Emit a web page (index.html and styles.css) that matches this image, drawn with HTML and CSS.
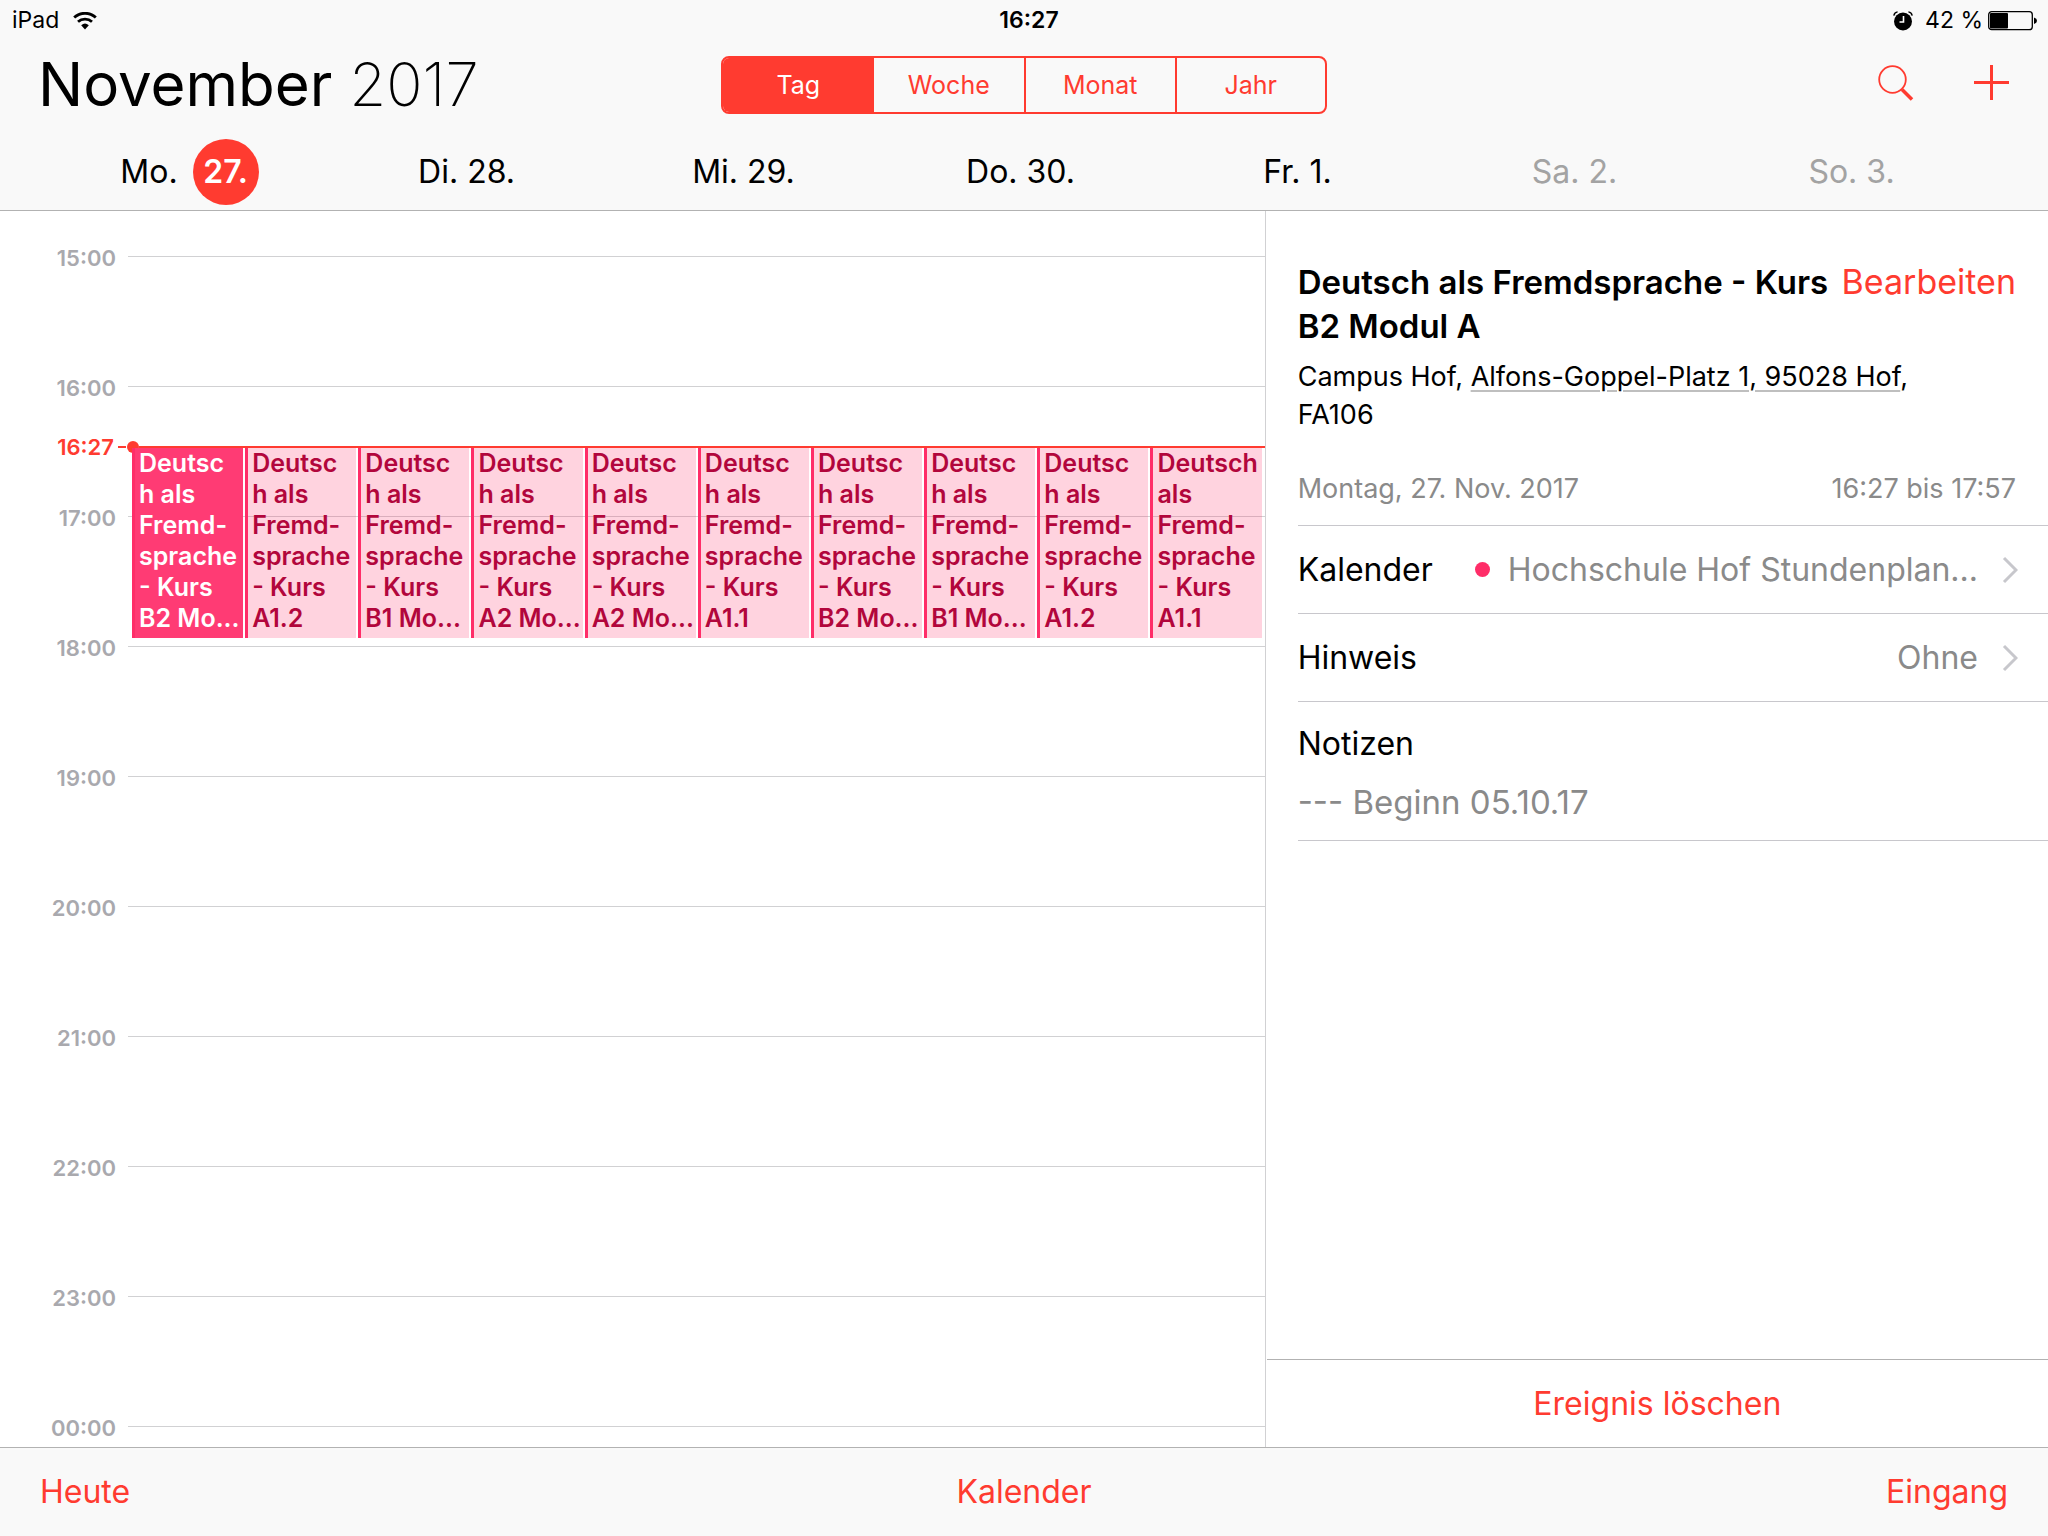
FILE: index.html
```html
<!DOCTYPE html>
<html lang="de">
<head>
<meta charset="utf-8">
<meta name="viewport" content="width=device-width, initial-scale=1">
<title>Kalender</title>
<link rel="stylesheet" href="styles.css">
</head>
<body>
<header class="top">
  <div class="status">
    <div class="status-left">
      <span>iPad</span>
      <svg class="wifi" width="24" height="18" viewBox="0 0 24 18" aria-hidden="true">
        <path d="M1.2 5.6a15.6 15.6 0 0 1 21.6 0" fill="none" stroke="#000" stroke-width="2.8"/>
        <path d="M5 9.8a10.4 10.4 0 0 1 14 0" fill="none" stroke="#000" stroke-width="2.8"/>
        <path d="M8.2 13.2a5.8 5.8 0 0 1 7.600 0L12 17.600z" fill="#000"/>
      </svg>
    </div>
    <time class="clock">16:27</time>
    <div class="status-right">
      <svg class="alarm" width="20" height="20" viewBox="0 0 20 20" aria-hidden="true">
        <circle cx="10" cy="10.500" r="9" fill="#000"/>
        <path d="M10.500 5v6H6.500" fill="none" stroke="#fff" stroke-width="1.600"/>
        <path d="M0.800 4.600Q1.500 1.200 4.600 0.900M19.200 4.600Q18.500 1.200 15.400 0.900" fill="none" stroke="#000" stroke-width="1.400"/>
      </svg>
      <span>42 %</span>
      <svg class="battery" width="50" height="20" viewBox="0 0 50 20" aria-hidden="true">
        <rect x="0.700" y="0.700" width="43.600" height="18" rx="3" fill="none" stroke="#000" stroke-width="1.300"/>
        <rect x="2" y="2" width="18" height="15.500" rx="1" fill="#000"/>
        <path d="M46 6.500q3 1 3 3.300t-3 3.300z" fill="#000"/>
      </svg>
    </div>
  </div>
  <div class="toolbar">
    <h1>November <span class="year">2017</span></h1>
    <nav class="segments" aria-label="Ansicht">
      <button type="button" class="segment selected">Tag</button>
      <button type="button" class="segment">Woche</button>
      <button type="button" class="segment">Monat</button>
      <button type="button" class="segment">Jahr</button>
    </nav>
    <div class="tools">
      <button type="button" aria-label="Suchen">
        <svg width="36" height="36" viewBox="0 0 36 36"><circle cx="14.500" cy="14.500" r="13.300" fill="none" stroke="#ff3b30" stroke-width="1.800"/><path d="M24 24.500l10 10" stroke="#ff3b30" stroke-width="3.600"/></svg>
      </button>
      <button type="button" aria-label="Neues Ereignis">
        <svg width="36" height="36" viewBox="0 0 36 36"><path d="M17.500 0v35M0 17.500h35" stroke="#ff3b30" stroke-width="3"/></svg>
      </button>
    </div>
  </div>
  <nav class="days" aria-label="Woche">
    <button type="button" class="day">Mo. <span class="today">27.</span></button>
    <button type="button" class="day">Di. 28.</button>
    <button type="button" class="day">Mi. 29.</button>
    <button type="button" class="day">Do. 30.</button>
    <button type="button" class="day">Fr. 1.</button>
    <button type="button" class="day weekend">Sa. 2.</button>
    <button type="button" class="day weekend">So. 3.</button>
  </nav>
</header>

<main class="content">
  <section class="timeline" aria-label="Tagesplan">
    <div class="hour"><span>15:00</span></div>
    <div class="hour"><span>16:00</span></div>
    <div class="hour"><span>17:00</span></div>
    <div class="hour"><span>18:00</span></div>
    <div class="hour"><span>19:00</span></div>
    <div class="hour"><span>20:00</span></div>
    <div class="hour"><span>21:00</span></div>
    <div class="hour"><span>22:00</span></div>
    <div class="hour"><span>23:00</span></div>
    <div class="hour"><span>00:00</span></div>
    <div class="now"><span>16:27</span><i class="now-dash"></i><i class="now-dot"></i><i class="now-line"></i></div>
    <div class="events">
      <article class="event active">Deutsc<br>h als<br>Fremd-<br>sprache<br>- Kurs<br>B2 Mo...</article>
      <article class="event">Deutsc<br>h als<br>Fremd-<br>sprache<br>- Kurs<br>A1.2</article>
      <article class="event">Deutsc<br>h als<br>Fremd-<br>sprache<br>- Kurs<br>B1 Mo...</article>
      <article class="event">Deutsc<br>h als<br>Fremd-<br>sprache<br>- Kurs<br>A2 Mo...</article>
      <article class="event">Deutsc<br>h als<br>Fremd-<br>sprache<br>- Kurs<br>A2 Mo...</article>
      <article class="event">Deutsc<br>h als<br>Fremd-<br>sprache<br>- Kurs<br>A1.1</article>
      <article class="event">Deutsc<br>h als<br>Fremd-<br>sprache<br>- Kurs<br>B2 Mo...</article>
      <article class="event">Deutsc<br>h als<br>Fremd-<br>sprache<br>- Kurs<br>B1 Mo...</article>
      <article class="event">Deutsc<br>h als<br>Fremd-<br>sprache<br>- Kurs<br>A1.2</article>
      <article class="event">Deutsch<br>als<br>Fremd-<br>sprache<br>- Kurs<br>A1.1</article>
    </div>
  </section>

  <aside class="details">
    <div class="details-body">
      <div class="summary">
        <div class="heading">
          <h2>Deutsch als Fremdsprache - Kurs<br>B2 Modul A</h2>
          <button type="button" class="link edit">Bearbeiten</button>
        </div>
        <p class="place">Campus Hof, <a href="#karte">Alfons-Goppel-Platz 1, 95028 Hof</a>,<br>FA106</p>
        <p class="when"><span>Montag, 27. Nov. 2017</span><span>16:27 bis 17:57</span></p>
      </div>
      <button type="button" class="row">
        <span class="row-label">Kalender</span>
        <span class="calendar-dot"></span>
        <span class="row-value">Hochschule Hof Stundenplan...</span>
        <svg width="16" height="28" viewBox="0 0 16 28" aria-hidden="true"><path d="M2 2l12 12L2 26" fill="none" stroke="#c7c7cc" stroke-width="3"/></svg>
      </button>
      <button type="button" class="row">
        <span class="row-label">Hinweis</span>
        <span class="row-value">Ohne</span>
        <svg width="16" height="28" viewBox="0 0 16 28" aria-hidden="true"><path d="M2 2l12 12L2 26" fill="none" stroke="#c7c7cc" stroke-width="3"/></svg>
      </button>
      <div class="notes">
        <h3>Notizen</h3>
        <p>--- Beginn 05.10.17</p>
      </div>
    </div>
    <button type="button" class="link delete">Ereignis löschen</button>
  </aside>
</main>

<footer class="bottom">
  <button type="button" class="link">Heute</button>
  <button type="button" class="link">Kalender</button>
  <button type="button" class="link">Eingang</button>
</footer>
</body>
</html>
```
FILE: styles.css
```css
* {
  box-sizing: border-box;
}

body {
  margin: 0;
  min-height: 100vh;
  display: flex;
  flex-direction: column;
  background: #fff;
  color: #000;
  font-family: Inter, "Liberation Sans", sans-serif;
  font-size: 32px;
  line-height: 44px;
}

h1, h2, h3, p {
  margin: 0;
  font-size: inherit;
  font-weight: 400;
}

button {
  padding: 0;
  border: 0;
  background: none;
  color: inherit;
  font: inherit;
  cursor: pointer;
}

svg {
  display: block;
  flex: none;
}

/* Header */
.top {
  background: #f9f9f9;
  border-bottom: 1px solid #b2b2b2;
}

.status,
.toolbar,
.bottom {
  display: grid;
  grid-template-columns: 1fr auto 1fr;
  align-items: center;
}

.status {
  height: 41px;
  padding: 0 10px 0 12px;
  font-size: 23px;
  line-height: 41px;
}

.status-left,
.status-right {
  display: flex;
  align-items: center;
}

.status-left {
  gap: 14px;
}

.status-right {
  justify-content: flex-end;
}

.alarm {
  margin-right: 12px;
}

.battery {
  margin-left: 5px;
}

.clock {
  padding-left: 8px;
  font-weight: 600;
}

.toolbar {
  height: 87px;
  padding: 0 38px;
}

h1 {
  font-size: 60px;
  line-height: 87px;
  white-space: nowrap;
}

.year {
  font-weight: 200;
}

.segments {
  display: grid;
  grid-template-columns: repeat(4, 1fr);
  width: 606px;
  height: 58px;
  border: 2px solid #ff3b30;
  border-radius: 8px;
  overflow: hidden;
}

.segment {
  color: #ff3b30;
  font-size: 25px;
}

.segment + .segment {
  border-left: 2px solid #ff3b30;
}

.segment.selected {
  background: #ff3b30;
  color: #fff;
}

.segment.selected + .segment {
  border-left: 0;
}

.tools {
  display: flex;
  justify-content: flex-end;
  gap: 60px;
  padding-bottom: 4px;
}

.days {
  display: grid;
  grid-template-columns: repeat(7, 1fr);
  height: 82px;
  padding: 5px 58px 0 51px;
}

.day {
  display: flex;
  align-items: center;
  justify-content: center;
}

.weekend {
  color: #a3a3a3;
}

.today {
  width: 66px;
  margin-left: 15px;
  border-radius: 50%;
  background: #ff3b30;
  color: #fff;
  font-weight: 600;
  line-height: 66px;
  text-align: center;
}

/* Day timeline */
.content {
  flex: 1;
  display: grid;
  grid-template-columns: 618fr 382fr;
}

.timeline {
  position: relative;
  padding-top: 31px;
  border-right: 1px solid #d1d1d3;
}

.hour {
  display: flex;
  height: 130px;
  color: #a9a9ae;
  font-size: 22px;
  font-weight: 600;
  line-height: 32px;
}

.hour:nth-child(10) {
  height: 32px;
}

.hour span,
.now span {
  width: 116px;
  text-align: right;
}

.hour::after {
  content: "";
  flex: 1;
  height: 1px;
  margin: 14px 0 0 12px;
  background: #d1d1d3;
}

.now {
  position: absolute;
  top: 220px;
  left: 0;
  right: 0;
  display: flex;
  align-items: center;
  color: #ff3b30;
  font-size: 22px;
  font-weight: 600;
  line-height: 32px;
}

.now span {
  width: 114px;
}

.now-dash,
.now-line {
  height: 2px;
  background: #ff3b30;
}

.now-dash {
  width: 8px;
  margin: 0 1px 0 4px;
}

.now-dot {
  width: 12px;
  height: 12px;
  border-radius: 50%;
  background: #ff3b30;
}

.now-line {
  flex: 1;
}

.events {
  position: absolute;
  top: 237px;
  left: 132px;
  right: 3px;
  display: grid;
  grid-template-columns: repeat(10, minmax(0, 1fr));
  gap: 2px;
}

.event {
  height: 190px;
  padding: 0 0 4px 4px;
  border-left: 3px solid #ff2d68;
  background: rgba(255, 45, 104, 0.21);
  color: #b2063c;
  font-size: 25px;
  font-weight: 600;
  line-height: 31px;
  white-space: nowrap;
}

.event.active {
  background: #ff3b74;
  color: #fff;
}

/* Event details */
.details {
  display: flex;
  flex-direction: column;
  min-width: 0;
}

.details-body {
  flex: 1;
  padding: 49px 0 0 32px;
}

.summary {
  padding: 0 32px 17px 0;
  border-bottom: 1px solid #c8c7cc;
}

.heading {
  display: flex;
  align-items: flex-start;
  justify-content: space-between;
}

h2 {
  font-size: 33px;
  font-weight: 600;
  white-space: nowrap;
}

.link {
  color: #ff3b30;
}

.edit {
  font-size: 34px;
}

.place {
  margin-top: 10px;
  font-size: 27px;
  line-height: 38px;
}

.place a {
  color: inherit;
  text-decoration: underline 2px #bfbfbf;
  text-underline-offset: 4px;
}

.when {
  display: flex;
  justify-content: space-between;
  margin-top: 36px;
  color: #8a8a8a;
  font-size: 27px;
  line-height: 38px;
}

.row {
  display: flex;
  align-items: center;
  width: 100%;
  height: 88px;
  padding-right: 30px;
  border-bottom: 1px solid #c8c7cc;
  text-align: left;
}

.row-value {
  margin-left: auto;
  margin-right: 24px;
  color: #8a8a8a;
  white-space: nowrap;
}

.calendar-dot {
  width: 15px;
  height: 15px;
  margin-left: auto;
  margin-right: 18px;
  border-radius: 50%;
  background: #ff2d68;
}

.calendar-dot + .row-value {
  margin-left: 0;
}

.notes {
  padding: 20px 0 16px;
  border-bottom: 1px solid #c8c7cc;
}

.notes p {
  margin-top: 14px;
  color: #8a8a8a;
  font-size: 33px;
}

.delete {
  height: 88px;
  margin-left: 1px;
  border-top: 1px solid #b2b2b2;
}

/* Bottom bar */
.bottom {
  height: 89px;
  padding: 0 40px;
  border-top: 1px solid #b2b2b2;
  background: #f9f9f9;
}

.bottom .link:first-child {
  justify-self: start;
}

.bottom .link:last-child {
  justify-self: end;
}
```
